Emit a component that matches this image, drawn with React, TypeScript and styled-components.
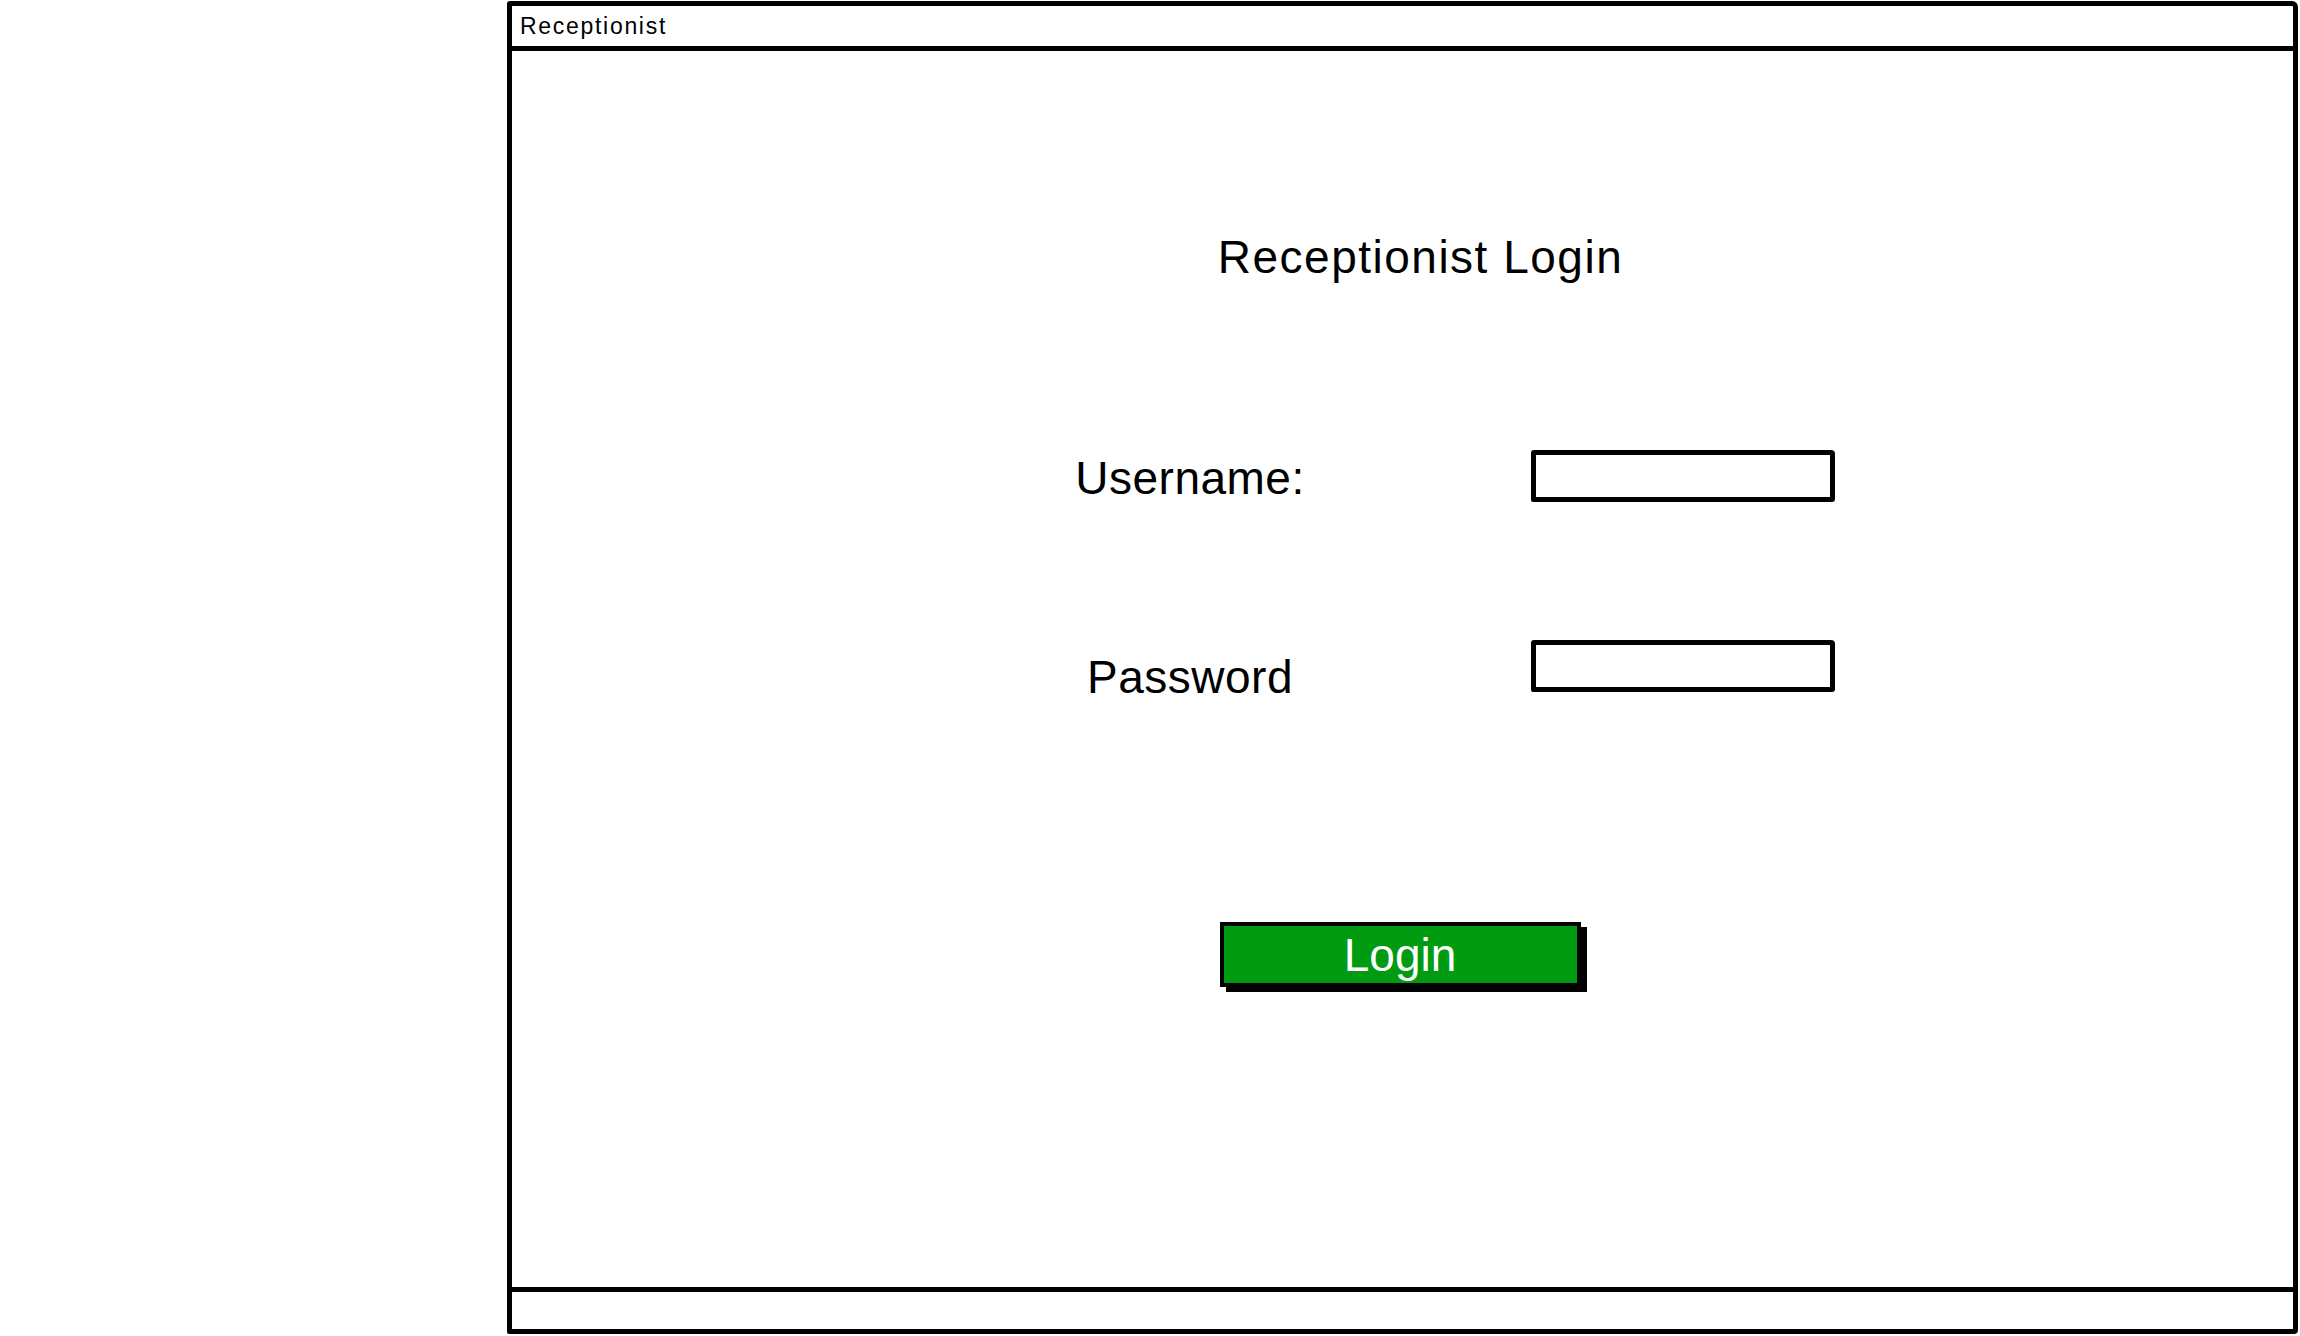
import styled, { createGlobalStyle } from "styled-components";

const GlobalStyle = createGlobalStyle`
  * {
    box-sizing: border-box;
  }
  body {
    margin: 0;
    background: #fff;
    color: #000;
    font-family: "Liberation Sans", Arial, sans-serif;
  }
`;

const Page = styled.div`
  height: 1336px;
  padding: 1px 2px 2px 507px;
  display: flex;
  overflow: hidden;
`;

// 창 틀
const Window = styled.div`
  flex: 1;
  display: flex;
  flex-direction: column;
  border: 5px solid #000;
  border-radius: 3px 6px 4px 2px;
`;

const TitleBar = styled.div`
  height: 45px;
  padding-left: 8px;
  display: flex;
  align-items: center;

  font-size: 23px;
  letter-spacing: 1.7px;

  border-bottom: 5px solid #000;
`;

const Content = styled.main`
  flex: 1;
  padding-top: 183px;
  display: flex;
  flex-direction: column;
  align-items: center;
`;

const Heading = styled.h1`
  margin: 0 0 0 36px;
  font-size: 46px;
  font-weight: normal;
  line-height: 1;
  letter-spacing: 1.5px;
`;

const Form = styled.form`
  margin: 170px 0 0 30px;
  display: grid;
  grid-template-columns: 380px 304px;
  column-gap: 151px;
  row-gap: 130px;
  align-items: center;
`;

const Label = styled.label<{ $drop: number }>`
  justify-self: center;
  margin-top: ${(p) => p.$drop}px;
  font-size: 46px;
  line-height: 1;
  letter-spacing: 0.5px;
`;

const Input = styled.input`
  width: 304px;
  height: 52px;
  margin: 0;
  padding: 0 10px;
  background: #fff;
  border: 5px solid #000;
  border-radius: 3px 4px 3px 2px;
  outline: none;
`;

const LoginButton = styled.button`
  width: 361px;
  height: 65px;
  margin: 222px 5px 0 0;
  padding: 0;

  background: #009b11;
  color: #fff;
  font-family: "Liberation Sans", Arial, sans-serif;
  font-size: 46px;
  line-height: 1;

  border: 4px solid #000;
  box-shadow: 6px 5px 0 #000;
  cursor: pointer;
`;

const StatusBar = styled.div`
  height: 42px;
  border-top: 5px solid #000;
`;

const App = () => {
  return (
    <>
      <GlobalStyle />
      <Page>
        <Window>
          <TitleBar>Receptionist</TitleBar>
          <Content>
            <Heading>Receptionist Login</Heading>
            <Form onSubmit={(e) => e.preventDefault()}>
              <Label $drop={4} htmlFor="username">
                Username:
              </Label>
              <Input id="username" type="text" />
              <Label $drop={22} htmlFor="password">
                Password
              </Label>
              <Input id="password" type="password" />
            </Form>
            <LoginButton type="button">Login</LoginButton>
          </Content>
          <StatusBar />
        </Window>
      </Page>
    </>
  );
};

export default App;
